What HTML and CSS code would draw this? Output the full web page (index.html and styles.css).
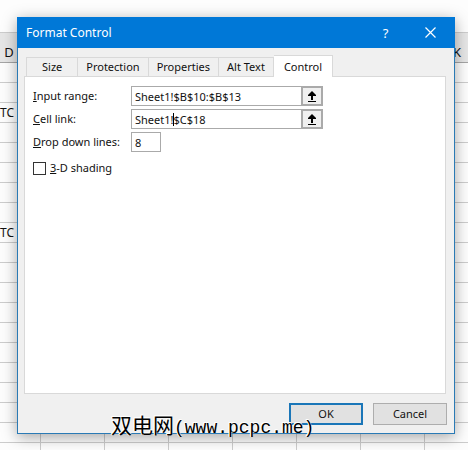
FILE: index.html
```html
<!DOCTYPE html>
<html lang="en">

<head>
  <meta charset="utf-8">
  <title>Format Control</title>
  <link rel="stylesheet" href="styles.css">
</head>

<body>

  <div class="workspace">

    <!-- Worksheet behind the dialog -->
    <div class="sheet">
      <table class="grid">
        <thead>
          <tr><th>D</th><th>E</th><th>F</th><th>G</th><th>H</th><th>I</th><th>J</th><th>K</th></tr>
        </thead>
        <tbody>
          <tr><td></td><td></td><td></td><td></td><td></td><td></td><td></td><td></td></tr>
          <tr><td></td><td></td><td></td><td></td><td></td><td></td><td></td><td></td></tr>
          <tr><td>TC</td><td></td><td></td><td></td><td></td><td></td><td></td><td></td></tr>
          <tr><td></td><td></td><td></td><td></td><td></td><td></td><td></td><td></td></tr>
          <tr><td></td><td></td><td></td><td></td><td></td><td></td><td></td><td></td></tr>
          <tr><td></td><td></td><td></td><td></td><td></td><td></td><td></td><td></td></tr>
          <tr><td></td><td></td><td></td><td></td><td></td><td></td><td></td><td></td></tr>
          <tr><td></td><td></td><td></td><td></td><td></td><td></td><td></td><td></td></tr>
          <tr><td>TC</td><td></td><td></td><td></td><td></td><td></td><td></td><td></td></tr>
          <tr><td></td><td></td><td></td><td></td><td></td><td></td><td></td><td></td></tr>
          <tr><td></td><td></td><td></td><td></td><td></td><td></td><td></td><td></td></tr>
          <tr><td></td><td></td><td></td><td></td><td></td><td></td><td></td><td></td></tr>
          <tr><td></td><td></td><td></td><td></td><td></td><td></td><td></td><td></td></tr>
          <tr><td></td><td></td><td></td><td></td><td></td><td></td><td></td><td></td></tr>
          <tr><td></td><td></td><td></td><td></td><td></td><td></td><td></td><td></td></tr>
          <tr><td></td><td></td><td></td><td></td><td></td><td></td><td></td><td></td></tr>
          <tr><td></td><td></td><td></td><td></td><td></td><td></td><td></td><td></td></tr>
          <tr class="open"><td></td><td></td><td></td><td></td><td></td><td></td><td></td><td></td></tr>
          <tr class="open"><td></td><td></td><td></td><td></td><td></td><td></td><td></td><td></td></tr>
          <tr class="open"><td></td><td></td><td></td><td></td><td></td><td></td><td></td><td></td></tr>
        </tbody>
      </table>
    </div>

    <form class="dialog" action="#">
      <div class="title-bar">
        <h1 class="title">Format Control</h1>
        <button class="title-button" type="button" aria-label="Help">?</button>
        <button class="title-button" type="button" aria-label="Close">
          <svg width="11" height="11" viewBox="0 0 11 11"><path d="M.5 .5l10 10M10.500 .5l-10 10" stroke="#fff" stroke-width="1.200" fill="none"/></svg>
        </button>
      </div>

      <div class="tabs">
        <button class="tab" type="button">Size</button>
        <button class="tab" type="button">Protection</button>
        <button class="tab" type="button">Properties</button>
        <button class="tab" type="button">Alt Text</button>
        <button class="tab active" type="button">Control</button>
      </div>

      <div class="panel">
        <label for="input-range"><u>I</u>nput range:</label>
        <div class="range">
          <input class="field" id="input-range" type="text" value="Sheet1!$B$10:$B$13">
          <button class="pick" type="button" aria-label="Select input range">
            <svg width="10" height="11" viewBox="0 0 10 11"><path d="M5 0L9 4v1H6v4H4V5H1V4zM1 10h8v1H1z"/></svg>
          </button>
        </div>

        <label for="cell-link"><u>C</u>ell link:</label>
        <div class="range">
          <input class="field" id="cell-link" type="text" value="Sheet1!$C$18">
          <span class="caret"></span>
          <button class="pick" type="button" aria-label="Select cell link">
            <svg width="10" height="11" viewBox="0 0 10 11"><path d="M5 0L9 4v1H6v4H4V5H1V4zM1 10h8v1H1z"/></svg>
          </button>
        </div>

        <label for="drop-lines"><u>D</u>rop down lines:</label>
        <input class="field lines" id="drop-lines" type="text" value="8">

        <div class="shading">
          <input class="check" id="shading" type="checkbox">
          <label for="shading"><u>3</u>-D shading</label>
        </div>
      </div>

      <div class="actions">
        <button class="action default" type="submit">OK</button>
        <button class="action" type="button">Cancel</button>
      </div>
    </form>

    <div class="watermark">双电网<span class="site">(www.pcpc.me)</span></div>

  </div>

</body>

</html>
```

FILE: styles.css
```css
body {
  margin: 0;
  background: #fdfdfd;
  font-family: "Noto Sans", "Open Sans", sans-serif;
  font-size: 11px;
  line-height: 16px;
  color: #111;
}

button,
input {
  font: inherit;
  color: inherit;
  margin: 0;
  padding: 0;
  box-sizing: border-box;
}

.workspace {
  position: relative;
  min-height: 100vh;
}

/* Worksheet */
.sheet {
  height: 100vh;
  overflow: hidden;
  padding-top: 32px;
  box-sizing: border-box;
}

.grid {
  table-layout: fixed;
  width: 512px;
  margin-left: -23px;
  border-spacing: 0;
  font-size: 12px;
}

.grid th,
.grid td {
  box-sizing: border-box;
  height: 20px;
  padding: 0;
  line-height: 16px;
  border-bottom: 1px solid #ccc;
}

.grid th {
  height: 31px;
  padding-top: 8px;
  font-size: 13px;
  font-weight: normal;
  background: #e6e6e6;
  border-top: 1px solid #ccc;
  border-bottom-color: #a5a5a5;
}

.grid td {
  padding-right: 27px;
  text-align: right;
}

.grid .open td {
  border-right: 1px solid #ccc;
}

/* Dialog window */
.dialog {
  position: absolute;
  top: 17px;
  left: 17px;
  right: 13px;
  border: 1px solid #2a7ab5;
  background: #f0f0f0;
  box-shadow: 0 3px 14px rgba(0, 0, 0, 0.35);
  box-sizing: border-box;
}

.title-bar {
  display: flex;
  align-items: center;
  height: 31px;
  margin: -1px -1px 0;
  padding: 0 2px 0 9px;
  background: #0078d7;
  color: #fff;
}

.title {
  flex: 1;
  margin: 0;
  font-size: 12px;
  font-weight: normal;
}

.title-button {
  width: 45px;
  height: 30px;
  border: none;
  background: none;
  font-size: 13px;
}

.title-button svg {
  display: block;
  margin: auto;
}

.tabs {
  display: flex;
  align-items: flex-end;
  height: 28px;
  padding: 0 8px;
}

.tab {
  height: 19px;
  padding: 0 8px;
  border: 1px solid #d9d9d9;
  border-width: 1px 1px 0 0;
  background: #f0f0f0;
}

.tab:first-child {
  padding: 0 15px;
  border-left-width: 1px;
}

.tab.active {
  position: relative;
  height: 22px;
  margin-bottom: -1px;
  padding: 0 10px;
  background: #fff;
}

.panel {
  display: grid;
  grid-template-columns: 98px 192px;
  align-content: start;
  align-items: center;
  row-gap: 3px;
  min-height: 318px;
  margin: 0 8px 0 6px;
  padding: 9px 8px 0;
  border: 1px solid #d9d9d9;
  background: #fff;
  box-sizing: border-box;
}

.range {
  position: relative;
  display: flex;
}

.field {
  flex: 1;
  min-width: 0;
  height: 20px;
  padding: 0 3px;
  border: 1px solid #aaa;
  background: #fff;
}

/* Text cursor inside the active field */
.caret {
  position: absolute;
  top: 4px;
  left: 42px;
  width: 1px;
  height: 13px;
  background: #000;
}

.lines {
  width: 30px;
}

.pick {
  display: flex;
  align-items: center;
  justify-content: center;
  width: 22px;
  height: 20px;
  margin-left: -1px;
  border: 2px solid #aaa;
  background: #f0f0f0;
}

.shading {
  display: flex;
  grid-column: 1 / 3;
  align-items: center;
  gap: 4px;
  margin-top: 5px;
}

.check {
  appearance: none;
  width: 13px;
  height: 13px;
  border: 1px solid #333;
  background: #fff;
}

.actions {
  display: flex;
  justify-content: flex-end;
  gap: 10px;
  padding: 9px 7px 8px;
}

.action {
  width: 74px;
  height: 22px;
  border: 1px solid #adadad;
  background: #e1e1e1;
}

.action.default {
  border: 2px solid #1a76b8;
}

/* Site mark printed over everything */
.watermark {
  position: absolute;
  left: 111px;
  bottom: 10px;
  font-family: "Noto Sans CJK SC", sans-serif;
  font-size: 21px;
  line-height: 24px;
  color: #000;
  text-shadow: -1px -1px #fff, -1px 0 #fff, 0 -1px #fff;
}

.site {
  font-family: "Liberation Mono", monospace;
  font-size: 18px;
}
```
